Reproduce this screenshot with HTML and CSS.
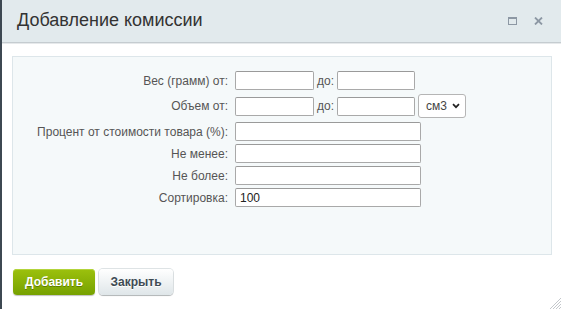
FILE: index.html
```html
<!DOCTYPE html>
<html lang="ru">
<head>
<meta charset="utf-8">
<title>Добавление комиссии</title>
<link rel="stylesheet" href="styles.css">
</head>
<body>
<div class="dialog">
  <div class="head">
    <div class="title">Добавление комиссии</div>
    <div class="head-icons">
      <svg class="ico" width="9" height="8" viewBox="0 0 9 8"><rect x="0.5" y="0.5" width="8" height="7" fill="none" stroke="#8d98a4" stroke-width="1"/><rect x="0" y="0" width="9" height="2" fill="#8d98a4"/></svg>
      <svg class="ico" width="9" height="8" viewBox="0 0 9 8"><path d="M1 0.5 L8 7.5 M8 0.5 L1 7.5" stroke="#8d98a4" stroke-width="1.8"/></svg>
    </div>
  </div>
  <div class="body">
    <div class="panel">
      <div class="row r1">
        <div class="lbl">Вес (грамм) от:</div>
        <div class="ctl"><input class="inp short" type="text"><span class="do">до:</span><input class="inp short2" type="text"></div>
      </div>
      <div class="row r2">
        <div class="lbl">Объем от:</div>
        <div class="ctl"><input class="inp short" type="text"><span class="do">до:</span><input class="inp short2" type="text"><div class="sel"><span>см3</span><svg width="8" height="6" viewBox="0 0 8 6"><path d="M1 1.2 L4 4.2 L7 1.2" fill="none" stroke="#222" stroke-width="1.7"/></svg></div></div>
      </div>
      <div class="row r3">
        <div class="lbl">Процент от стоимости товара (%):</div>
        <div class="ctl"><input class="inp wide" type="text"></div>
      </div>
      <div class="row">
        <div class="lbl">Не менее:</div>
        <div class="ctl"><input class="inp wide" type="text"></div>
      </div>
      <div class="row">
        <div class="lbl">Не более:</div>
        <div class="ctl"><input class="inp wide" type="text"></div>
      </div>
      <div class="row">
        <div class="lbl">Сортировка:</div>
        <div class="ctl"><input class="inp wide" type="text" value="100"></div>
      </div>
    </div>
    <div class="buttons">
      <button class="btn btn-save">Добавить</button>
      <button class="btn btn-close">Закрыть</button>
    </div>
  </div>
  <svg class="grip" width="12" height="12" viewBox="0 0 12 12"><path d="M12 1 L1 12 M12 4 L4 12 M12 7 L7 12 M12 10 L10 12" stroke="#c4c8cc" stroke-width="1"/></svg>
</div>
</body>
</html>
```
FILE: styles.css
```css
html, body {
  margin: 0;
  padding: 0;
  height: 100%;
}
body {
  background: #3d4852;
  font-family: "Liberation Sans", Arial, sans-serif;
  overflow: hidden;
}
.dialog {
  position: relative;
  margin-left: 2px;
  height: 309px;
  background: #fff;
}
.head {
  height: 42px;
  background: #e2eaed;
  border-bottom: 1px solid #c5ccd0;
  box-shadow: 0 1px 0 #e6e9eb;
  display: flex;
  align-items: center;
  padding-left: 15px;
  padding-right: 18px;
}
.title {
  flex: 1;
  font-size: 18px;
  color: #333;
  padding-bottom: 1px;
}
.head-icons {
  display: flex;
  gap: 17px;
  align-items: center;
}
.ico {
  display: block;
}
.body {
  padding: 13px 9px 0 10px;
}
.panel {
  height: 199px;
  box-sizing: border-box;
  background: #f5f9fa;
  border: 1px solid #dde6ea;
  padding-top: 14px;
}
.row {
  display: flex;
  align-items: center;
  margin-bottom: 3px;
}
.r1 { margin-bottom: 4px; }
.r2 { margin-bottom: 4px; }
.lbl {
  width: 215px;
  text-align: right;
  font-size: 12px;
  color: #555;
  margin-right: 7px;
  flex: none;
}
.ctl {
  display: flex;
  align-items: center;
}
.inp {
  box-sizing: border-box;
  height: 19px;
  border: 1px solid #a9a9a9;
  border-top-color: #9a9a9a;
  border-radius: 2px;
  background: #fff;
  font-family: "Liberation Sans", Arial, sans-serif;
  font-size: 12px;
  color: #222;
  padding: 0 4px;
  margin: 0;
  outline: none;
}
.short { width: 79px; }
.short2 { width: 78px; }
.wide { width: 186px; }
.do {
  font-size: 12px;
  color: #555;
  margin: 0 3px 0 3px;
}
.sel {
  box-sizing: border-box;
  width: 48px;
  height: 24px;
  margin-left: 3px;
  border: 1px solid #b5b5b5;
  border-radius: 3px;
  background: #fff;
  display: flex;
  align-items: center;
  justify-content: space-between;
  padding: 0 5px 0 7px;
  font-size: 12px;
  color: #444;
}
.sel svg { display: block; flex: none; }
.buttons {
  display: flex;
  gap: 4px;
  margin-top: 14px;
  padding-left: 1px;
}
.btn {
  height: 26px;
  box-sizing: border-box;
  border-radius: 4px;
  font-family: "Liberation Sans", Arial, sans-serif;
  font-size: 12px;
  font-weight: bold;
  padding: 0;
  margin: 0;
  cursor: pointer;
}
.btn-save {
  width: 82px;
  border: none;
  color: #fff;
  background: linear-gradient(#9cc10d, #76a100);
  box-shadow: 0 1px 1px rgba(0,0,0,0.25), inset 0 1px 0 #b3d43c;
  text-shadow: 0 1px rgba(60,80,0,0.5);
}
.btn-close {
  width: 74px;
  border: none;
  color: #3f4b54;
  background: linear-gradient(#ffffff, #dfe6e9);
  box-shadow: 0 1px 1px rgba(0,0,0,0.2), 0 0 0 1px rgba(200,208,212,0.6);
  text-shadow: 0 1px #fff;
}
.grip {
  position: absolute;
  right: 0;
  bottom: 0;
}
```
